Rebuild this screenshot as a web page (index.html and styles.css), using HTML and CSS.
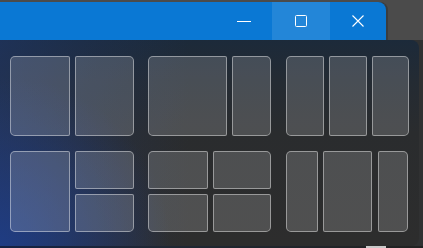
FILE: index.html
```
<!DOCTYPE html>
<html lang="en">

<head>
    <meta charset="UTF-8">
    <meta name="viewport" content="width=device-width, initial-scale=1.0">
    <title>Snap layouts</title>
    <link rel="stylesheet" href="styles.css">
</head>

<body>
    <div class="titlebar">
        <div class="caption_btn">
            <svg width="16" height="16" viewBox="0 0 16 16"><path d="M1 8.5h14" stroke="#fff" stroke-width="1" /></svg>
        </div>
        <div class="caption_btn max hover">
            <svg width="16" height="16" viewBox="0 0 16 16"><rect x="2.5" y="2.5" width="11" height="11" rx="1" fill="none" stroke="#fff" stroke-width="1" /></svg>
        </div>
        <div class="caption_btn close">
            <svg width="16" height="16" viewBox="0 0 16 16"><path d="M2.5 2.5l11 11M13.5 2.5l-11 11" stroke="#fff" stroke-width="1.1" /></svg>
        </div>
    </div>

    <div class="flyout">
        <div class="layouts">
            <!-- 50 / 50 -->
            <div class="group g_half">
                <span class="cell tl bl"></span>
                <span class="cell tr br"></span>
            </div>
            <!-- 2/3 + 1/3 -->
            <div class="group g_wide">
                <span class="cell tl bl"></span>
                <span class="cell tr br"></span>
            </div>
            <!-- thirds -->
            <div class="group g_thirds">
                <span class="cell tl bl"></span>
                <span class="cell"></span>
                <span class="cell tr br"></span>
            </div>
            <!-- left + two stacked -->
            <div class="group g_side">
                <span class="cell tl bl big"></span>
                <span class="cell tr"></span>
                <span class="cell br"></span>
            </div>
            <!-- quarters -->
            <div class="group g_quad">
                <span class="cell tl"></span>
                <span class="cell tr"></span>
                <span class="cell bl"></span>
                <span class="cell br"></span>
            </div>
            <!-- narrow / wide / narrow -->
            <div class="group g_center">
                <span class="cell tl bl"></span>
                <span class="cell"></span>
                <span class="cell tr br"></span>
            </div>
        </div>
    </div>
    <div class="bottom_strip">
        <span class="task_mark"></span>
    </div>
</body>

</html>
```

FILE: styles.css
```
body {
    margin: 0;
    width: 423px;
    height: 248px;
    overflow: hidden;
    background: linear-gradient(to bottom, #4b4b4b 0px, #4b4b4b 40px, #303132 40px);
    font-family: "Segoe UI", "Noto Sans", sans-serif;
}

.titlebar {
    width: 386px;
    height: 38px;
    margin-top: 2px;
    background-color: #0a78d4;
    border-radius: 0 8px 0 0;
    display: flex;
    justify-content: flex-end;
    box-shadow: 2px 0 0 #3a3d40;
}

.caption_btn {
    width: 56px;
    height: 38px;
    display: flex;
    align-items: center;
    justify-content: center;
}

.caption_btn svg {
    margin-top: -1px;
}

.caption_btn.max {
    width: 58px;
}

.caption_btn.hover {
    background-color: #2386d8;
}

.caption_btn.close {
    border-radius: 0 8px 0 0;
}

.flyout {
    width: 419px;
    height: 206px;
    box-sizing: border-box;
    padding: 16px 0 0 10px;
    border-radius: 0 8px 8px 0;
    background:
        radial-gradient(ellipse 170px 170px at 0% 100%, rgba(30, 62, 140, 0.85), rgba(30, 62, 140, 0) 100%),
        linear-gradient(to right, rgba(32, 56, 110, 0.55) 0%, rgba(32, 56, 110, 0.25) 22%, rgba(40, 44, 52, 0) 45%),
        linear-gradient(to bottom, #1c2a3a 0%, #242b33 20%, #2a2c2e 45%, #2d2d2d 100%);
}

.layouts {
    display: grid;
    grid-template-columns: 124px 123px 123px;
    grid-template-rows: 80px 81px;
    column-gap: 14px;
    row-gap: 15px;
}

.layouts .group:nth-child(3n) {
    margin-left: 1px;
}

.group {
    display: grid;
    gap: 5px;
}

.g_half {
    grid-template-columns: 60px 59px;
}

.g_wide {
    grid-template-columns: 79px 39px;
}

.g_thirds {
    grid-template-columns: 38px 38px 37px;
}

.g_side {
    grid-template-columns: 60px 59px;
    grid-template-rows: 38px 38px;
}

.g_side .big {
    grid-row: 1 / 3;
}

.g_quad {
    grid-template-columns: 60px 58px;
    grid-template-rows: 38px 38px;
}

.g_center {
    grid-template-columns: 32px 49px 31px;
    column-gap: 5px;
}

.g_center .cell:nth-child(3) {
    margin-left: 1px;
}

.cell {
    display: block;
    box-sizing: border-box;
    border: 1px solid rgba(255, 255, 255, 0.42);
    background-color: rgba(255, 255, 255, 0.17);
    border-radius: 2px;
}

.cell.tl {
    border-top-left-radius: 5px;
}

.cell.tr {
    border-top-right-radius: 5px;
}

.cell.bl {
    border-bottom-left-radius: 5px;
}

.cell.br {
    border-bottom-right-radius: 5px;
}

.bottom_strip {
    height: 2px;
    background: linear-gradient(to right, #142244 0%, #1f2733 40%, #222 100%);
    position: relative;
}

.task_mark {
    position: absolute;
    left: 366px;
    top: 0;
    width: 20px;
    height: 2px;
    background-color: #c9c9c9;
}
```
